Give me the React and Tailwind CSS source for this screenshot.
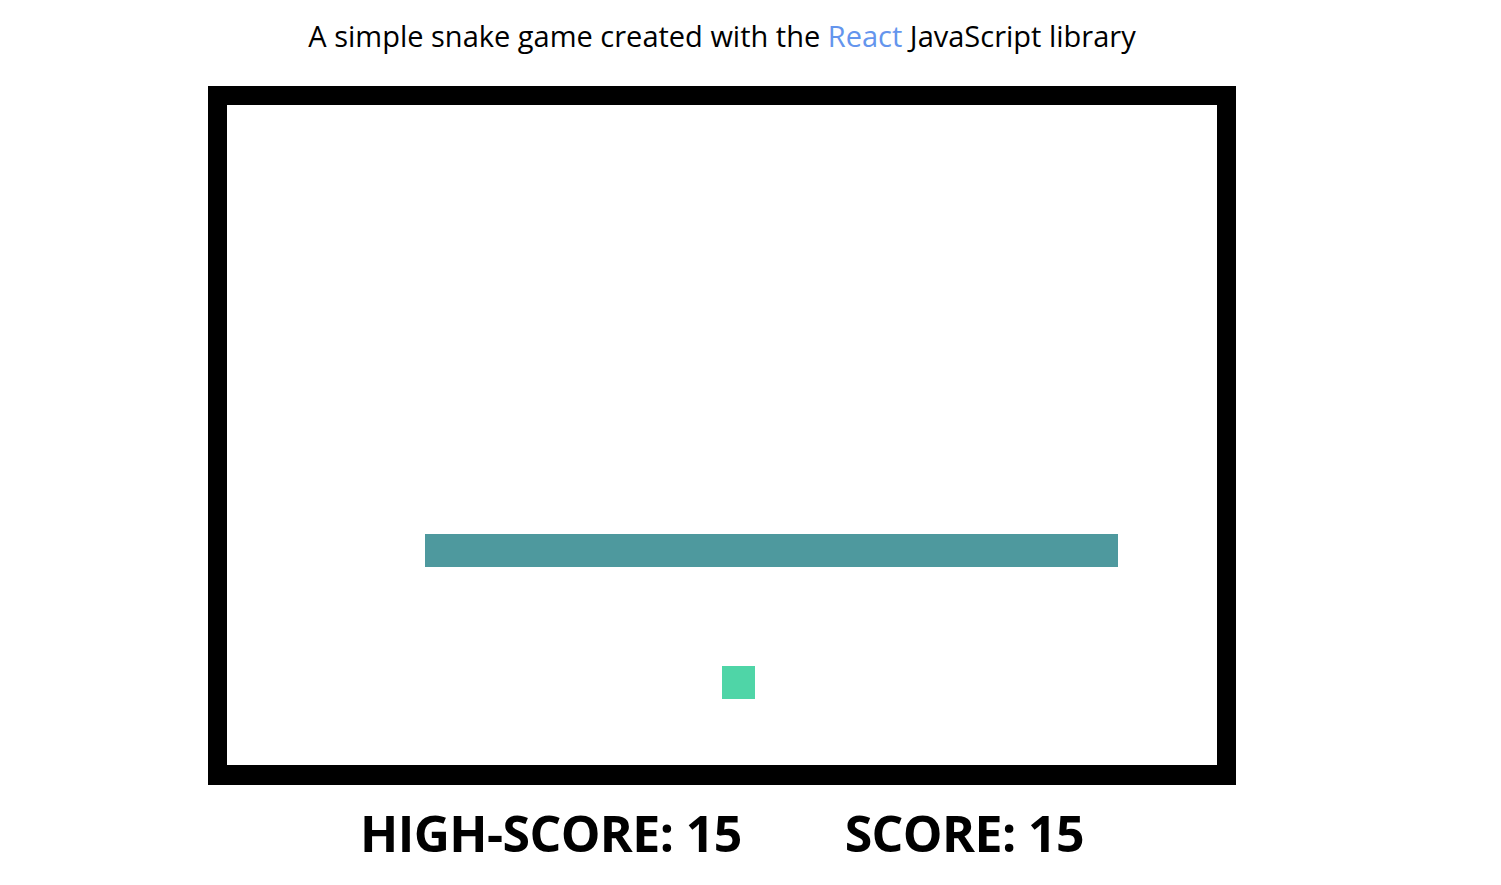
import React from "react";

const snake = Array.from({ length: 21 }, (_, i) => ({ x: 6 + i, y: 13 }));
const food = { x: 15, y: 17 };

export default function App() {
  return (
    <div className="w-[1444px] flex flex-col items-center bg-white text-black" style={{ fontFamily: '"Open Sans", "Noto Sans", sans-serif' }}>
      <p className="mt-[14px] text-[29px] leading-[43px] tracking-[0px]">
        A simple snake game created with the <span className="text-[#6495ED]">React</span> JavaScript library
      </p>
      <div className="mt-[29px] w-[1028px] h-[699px] border-[19px] border-b-[20px] border-black bg-white">
        <div className="grid grid-cols-[repeat(30,33px)] grid-rows-[repeat(20,33px)]">
          {snake.map((s, i) => (
            <div key={i} className="bg-[#4E999E]" style={{ gridColumn: s.x + 1, gridRow: s.y + 1 }} />
          ))}
          <div className="bg-[#4FD5A7]" style={{ gridColumn: food.x + 1, gridRow: food.y + 1 }} />
        </div>
      </div>
      <div className="mt-[13px] flex gap-[103px] text-[50px] leading-[70px] font-bold tracking-[-0.6px]">
        <span>HIGH-SCORE: 15</span>
        <span>SCORE: 15</span>
      </div>
    </div>
  );
}
